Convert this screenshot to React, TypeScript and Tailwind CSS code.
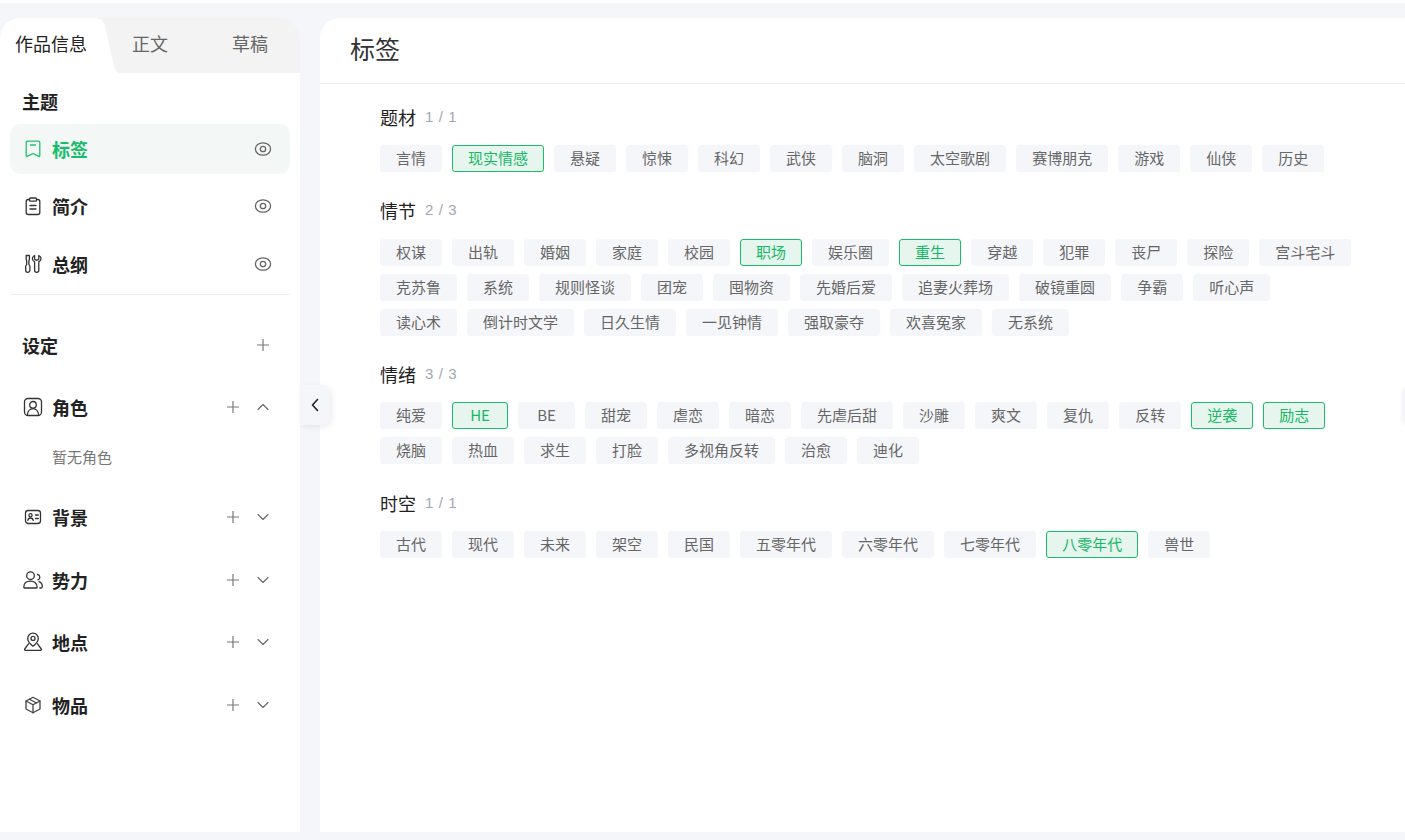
import React from "react";

type Tag = [string, boolean?];

const sections: { title: string; count: string; mt: string; tagMt: string; tags: Tag[] }[] = [
  { title: "题材", count: "1 / 1", mt: "mt-0", tagMt: "mt-[16px]", tags: [["言情"], ["现实情感", true], ["悬疑"], ["惊悚"], ["科幻"], ["武侠"], ["脑洞"], ["太空歌剧"], ["赛博朋克"], ["游戏"], ["仙侠"], ["历史"]] },
  { title: "情节", count: "2 / 3", mt: "mt-[26px]", tagMt: "mt-[17px]", tags: [["权谋"], ["出轨"], ["婚姻"], ["家庭"], ["校园"], ["职场", true], ["娱乐圈"], ["重生", true], ["穿越"], ["犯罪"], ["丧尸"], ["探险"], ["宫斗宅斗"], ["克苏鲁"], ["系统"], ["规则怪谈"], ["团宠"], ["囤物资"], ["先婚后爱"], ["追妻火葬场"], ["破镜重圆"], ["争霸"], ["听心声"], ["读心术"], ["倒计时文学"], ["日久生情"], ["一见钟情"], ["强取豪夺"], ["欢喜冤家"], ["无系统"]] },
  { title: "情绪", count: "3 / 3", mt: "mt-[26px]", tagMt: "mt-[16px]", tags: [["纯爱"], ["HE", true], ["BE"], ["甜宠"], ["虐恋"], ["暗恋"], ["先虐后甜"], ["沙雕"], ["爽文"], ["复仇"], ["反转"], ["逆袭", true], ["励志", true], ["烧脑"], ["热血"], ["求生"], ["打脸"], ["多视角反转"], ["治愈"], ["迪化"]] },
  { title: "时空", count: "1 / 1", mt: "mt-[27px]", tagMt: "mt-[16px]", tags: [["古代"], ["现代"], ["未来"], ["架空"], ["民国"], ["五零年代"], ["六零年代"], ["七零年代"], ["八零年代", true], ["兽世"]] },
];

const S = ({ children, c = "#333" }: { children: React.ReactNode; c?: string }) => (
  <svg width={20} height={20} viewBox="0 0 20 20" fill="none" stroke={c} strokeWidth="1.3" strokeLinecap="round" strokeLinejoin="round" className="shrink-0">
    {children}
  </svg>
);

const Eye = () => (
  <S c="#666">
    <ellipse cx="10" cy="10" rx="7.600" ry="6.200" />
    <circle cx="10" cy="10" r="2.700" />
  </S>
);
const Plus = () => (
  <svg width="14" height="14" viewBox="0 0 14 14" fill="none" stroke="#777" strokeWidth="1.2" className="shrink-0">
    <path d="M1 7h12M7 1v12" />
  </svg>
);
const Chevron = ({ up }: { up?: boolean }) => (
  <svg width="12" height="8" viewBox="0 0 12 8" fill="none" stroke="#666" strokeWidth="1.1" strokeLinecap="round" strokeLinejoin="round" className="shrink-0">
    <path d={up ? "M1 6.500 6 1.500l5 5" : "M1 1.500l5 5 5-5"} />
  </svg>
);

const icons = {
  bookmark: (
    <S c="#22c06f">
      <path d="M3.200 3.500c0-.8.5-1.300 1.300-1.300h11c.8 0 1.300.5 1.300 1.300v13.300c0 .6-.6.9-1 .6L10 14.500l-5.800 2.900c-.4.300-1 0-1-.6Z" />
      <path d="M7.500 6h5" />
    </S>
  ),
  clip: (
    <S c="#333">
      <path d="M6.500 3.500H5.200C4 3.500 3.200 4.300 3.200 5.500v11c0 1.200.8 2 2 2h9.600c1.200 0 2-.8 2-2v-11c0-1.200-.8-2-2-2h-1.300" />
      <rect x="6.500" y="2" width="7" height="3.200" rx="1" />
      <path d="M7 9.500h6M7 13h6" />
    </S>
  ),
  tool: (
    <S c="#333">
      <path d="M3.200 1.500h3.200v4.300l-.5 1v3.700l1 1.500v4.300a2.100 2.100 0 0 1-4.200 0v-4.300l1-1.500V6.800l-.5-1Z" />
      <path d="M11.600 1.500c-1.900.7-2.700 2.800-1.800 4.500.4.800 1.100 1.300 1.800 1.600v8.700a2.100 2.100 0 0 0 4.200 0V7.600c.8-.3 1.400-.8 1.800-1.600.9-1.700.1-3.800-1.800-4.500v3.700l-2.100 1.200-2.100-1.200Z" />
    </S>
  ),
  role: (
    <S c="#333">
      <rect x="1.500" y="1.500" width="17" height="17" rx="3.500" />
      <circle cx="10" cy="7.800" r="3.300" />
      <path d="M4.300 18.300c.3-3.900 2.700-6.600 5.700-6.600s5.400 2.700 5.700 6.600" />
    </S>
  ),
  card: (
    <S c="#333">
      <rect x="2.500" y="3.500" width="15" height="13" rx="2.700" />
      <circle cx="7.500" cy="8.300" r="1.600" />
      <path d="M4.800 13.300c.3-1.500 1.400-2.300 2.700-2.300s2.400.8 2.700 2.300M12.500 8h2.800M12.500 11.500h2.800" />
    </S>
  ),
  team: (
    <S c="#333">
      <circle cx="7.500" cy="5.700" r="3.800" />
      <path d="M.8 17.200c0-3.900 2.900-6 6.700-6s6.700 2.100 6.700 6c0 .4-.3.800-.8.800H1.600c-.5 0-.8-.4-.8-.8Z" />
      <path d="M14.500 4.500a2.800 2.800 0 0 1 .5 5.400M16 11.700c2 .7 3.300 2.400 3.300 4.700 0 .9-.6 1.600-1.500 1.600h-1" />
    </S>
  ),
  place: (
    <S c="#333">
      <path d="M10 1.200c-3 0-5.300 2.300-5.300 5.200 0 3.400 3.200 6.100 5.300 7.800 2.100-1.700 5.300-4.400 5.300-7.800 0-2.900-2.300-5.200-5.300-5.200Z" />
      <circle cx="10" cy="6.400" r="2" />
      <path d="M5.500 11.800 1.700 17c-.4.600 0 1.300.7 1.300h15.200c.7 0 1.100-.7.700-1.300l-3.800-5.200" />
    </S>
  ),
  box: (
    <S c="#444">
      <path d="M10 2.300 17 6v8l-7 3.800L3 14V6Z" />
      <path d="M3 6l7 3.800L17 6M10 9.800v8M6.500 4.200l7 3.800" />
    </S>
  ),
};

const TagChip = ({ label, on }: { label: string; on?: boolean }) => {
  const width = label === "HE" ? "w-[56px] px-0" : label === "BE" ? "w-[57px] px-0" : "px-[15px]";
  return (
    <span
      className={
        on
          ? `flex h-[27px] items-center justify-center rounded-[3px] border border-[#18bc6b] bg-[#e6f6ee] text-[15px] text-[#16b866] ${width}`
          : `flex h-[27px] items-center justify-center rounded-[3px] border border-[#f5f6fa] bg-[#f5f6fa] text-[15px] text-[#666] ${width}`
      }
    >
      {label}
    </span>
  );
};

const NavRow = ({ icon, label, mt, up }: { icon: React.ReactNode; label: string; mt: string; up?: boolean }) => (
  <div className={`flex h-[24px] items-center pl-[23px] pr-[30px] ${mt}`}>
    <span className="flex w-[20px] justify-center">{icon}</span>
    <span className="ml-[9px] text-[18px] font-bold text-[#222]">{label}</span>
    <span className="ml-auto flex items-center gap-[16px]">
      <Plus />
      <span className="flex w-[14px] justify-center"><Chevron up={up} /></span>
    </span>
  </div>
);

const ThemeRow = ({ icon, label, mt, active }: { icon: React.ReactNode; label: string; mt: string; active?: boolean }) => (
  <div className={`mx-[10px] flex h-[50px] items-center rounded-[10px] pl-[13px] pr-[17px] ${mt} ${active ? "bg-[#f3f8f7]" : ""}`}>
    <span className="flex w-[20px] justify-center">{icon}</span>
    <span className={`ml-[9px] text-[18px] font-bold ${active ? "text-[#18bc6b]" : "text-[#222]"}`}>{label}</span>
    <span className="ml-auto"><Eye /></span>
  </div>
);

export default function App() {
  return (
    <div className="relative flex h-[840px] w-[1405px] overflow-hidden bg-[#f5f6fa] pt-[18px] pb-[8px] font-['Noto_Sans_CJK_SC','Liberation_Sans',sans-serif]">
      <div className="absolute left-0 right-0 top-0 h-[3px] bg-white" />
      {/* left panel */}
      <aside className="relative flex w-[300px] shrink-0 flex-col overflow-hidden rounded-t-[20px] bg-white">
        <div className="relative flex h-[55px] bg-[#f3f3f3] text-[18px] text-[#666]">
          <svg className="absolute left-0 top-0" width="120" height="56" viewBox="0 0 120 56">
            <path d="M0 56V20C0 8 8 0 20 0H94C100 0 103 2 105 8L114 48C115 52 117 55 120 56Z" fill="#fff" />
          </svg>
          <span className="relative flex w-[100px] items-center pl-[15px] pb-[5px] text-[#222]">作品信息</span>
          <span className="relative flex w-[100px] items-center justify-center pb-[5px]">正文</span>
          <span className="relative flex w-[100px] items-center justify-center pb-[5px]">草稿</span>
        </div>
        <div className="mt-[16px] flex h-[24px] items-center pl-[22px] text-[18px] font-bold text-[#222]">主题</div>
        <ThemeRow icon={icons.bookmark} label="标签" mt="mt-[11px]" active />
        <ThemeRow icon={icons.clip} label="简介" mt="mt-[7px]" />
        <ThemeRow icon={icons.tool} label="总纲" mt="mt-[8px]" />
        <div className="mx-[10px] mt-[5px] h-px bg-[#eeeeee]" />
        <div className="mt-[38px] flex h-[24px] items-center pl-[22px] pr-[30px]">
          <span className="text-[18px] font-bold text-[#222]">设定</span>
          <span className="ml-auto"><Plus /></span>
        </div>
        <NavRow icon={icons.role} label="角色" mt="mt-[38px]" up />
        <div className="mt-[28px] h-[20px] pl-[52px] text-[15px] leading-[20px] text-[#777]">暂无角色</div>
        <NavRow icon={icons.card} label="背景" mt="mt-[38px]" />
        <NavRow icon={icons.team} label="势力" mt="mt-[39px]" />
        <NavRow icon={icons.place} label="地点" mt="mt-[38px]" />
        <NavRow icon={icons.box} label="物品" mt="mt-[39px]" />
      </aside>

      {/* collapse handle */}
      <div className="absolute left-[300px] top-[385px] flex h-[40px] w-[30px] items-center justify-center rounded-r-[8px] bg-[#f5f6fa] shadow-[2px_2px_6px_rgba(0,0,0,0.08)]">
        <svg width="10" height="14" viewBox="0 0 10 14" fill="none" stroke="#222" strokeWidth="1.600" strokeLinecap="round" strokeLinejoin="round">
          <path d="M7.500 1.500 2.500 7l5 5.500" />
        </svg>
      </div>

      {/* main */}
      <main className="ml-[20px] flex flex-1 flex-col rounded-tl-[20px] bg-white">
        <div className="flex h-[66px] shrink-0 items-center border-b border-[#eeeeee] pb-[3px] pl-[30px] text-[25px] text-[#333]">标签</div>
        <div className="pl-[60px] pr-[50px] pt-[21px]">
          {sections.map((s) => (
            <section key={s.title} className={s.mt}>
              <div className="flex h-[24px] items-center gap-[9px]">
                <span className="text-[18px] text-[#222]">{s.title}</span>
                <span className="font-['Liberation_Sans',sans-serif] text-[15px] tracking-[0.6px] text-[#a3a8b4]">{s.count}</span>
              </div>
              <div className={`${s.tagMt} flex flex-wrap gap-x-[10px] gap-y-[8px]`}>
                {s.tags.map(([t, on]) => (
                  <TagChip key={t} label={t} on={on} />
                ))}
              </div>
            </section>
          ))}
        </div>
      </main>

      {/* right edge handle */}
      <div className="absolute left-[1403px] top-[385px] h-[40px] w-[30px] rounded-l-[8px] bg-[#f5f6fa] shadow-[-1px_1px_4px_rgba(0,0,0,0.06)]" />
    </div>
  );
}
